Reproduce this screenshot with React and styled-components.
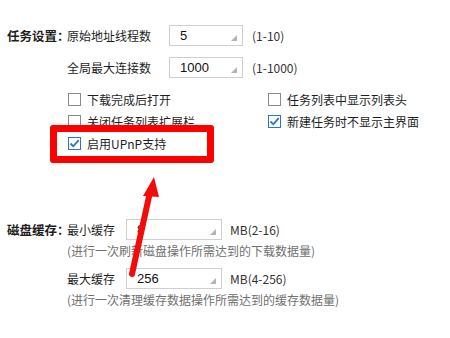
import React from 'react';
import styled, { createGlobalStyle } from 'styled-components';

const GlobalStyle = createGlobalStyle`
  html, body {
    margin: 0;
    padding: 0;
    background: #ffffff;
  }
  body {
    font-family: "Noto Sans CJK SC", "Noto Sans", sans-serif;
    font-size: 12px;
    color: #1e1e1e;
  }
`;

const Page = styled.div`
  position: relative;
  width: 450px;
  height: 338px;
  overflow: hidden;
  padding: 25px 0 0 7px;
  box-sizing: border-box;
`;

const Section = styled.div`
  display: flex;
  margin-top: ${(p) => p.$top || 0}px;
`;

const SectionLabel = styled.div`
  width: 60px;
  height: 21px;
  line-height: 21px;
  font-weight: bold;
  font-size: 12.5px;
  white-space: nowrap;
`;

const SectionBody = styled.div`
  display: flex;
  flex-direction: column;
`;

const FieldRow = styled.div`
  display: flex;
  align-items: center;
  height: 21px;
  margin-top: ${(p) => p.$top || 0}px;
`;

const FieldLabel = styled.span`
  width: ${(p) => p.$width}px;
  line-height: 21px;
  white-space: nowrap;
`;

const SpinBox = styled.div`
  position: relative;
  width: ${(p) => p.$width}px;
  height: 21px;
  box-sizing: border-box;
  border: 1px solid #cfcfcf;
  padding-left: 10px;
  line-height: 19px;
  font-family: "Liberation Sans", "Noto Sans", sans-serif;
  font-size: 13px;
  color: #111;
`;

const SpinArrow = styled.span`
  position: absolute;
  right: 5px;
  bottom: 4px;
  width: 0;
  height: 0;
  border-left: 6px solid transparent;
  border-bottom: 6px solid #b4b4b4;
`;

const Suffix = styled.span`
  margin-left: ${(p) => p.$gap || 9}px;
  white-space: nowrap;
  color: #333;
`;

const CheckGrid = styled.div`
  display: grid;
  grid-template-columns: 200px 200px;
  grid-auto-rows: 22px;
  margin-top: 10px;
  padding-left: 1px;
`;

const CheckItem = styled.label`
  display: flex;
  align-items: center;
  white-space: nowrap;
`;

const Box = styled.span`
  width: 13px;
  height: 13px;
  box-sizing: border-box;
  border: 1px solid ${(p) => (p.$checked ? '#2a72cc' : '#8a8a8a')};
  margin-right: 6px;
  display: flex;
  align-items: center;
  justify-content: center;
  background: #fff;
`;

const HelpText = styled.div`
  height: 22px;
  line-height: 22px;
  color: #707070;
  white-space: nowrap;
`;

const Highlight = styled.div`
  position: absolute;
  left: 50px;
  top: 125px;
  width: 164px;
  height: 38px;
  box-sizing: border-box;
  border: 7px solid #ff0000;
  border-radius: 3px;
`;

const ArrowLayer = styled.svg`
  position: absolute;
  left: 0;
  top: 0;
  pointer-events: none;
`;

function CheckBox({ checked, children }) {
  return (
    <CheckItem>
      <Box $checked={checked}>
        {checked && (
          <svg width="11" height="11" viewBox="0 0 11 11">
            <path d="M1.5 5.5 L4.3 8.3 L9.7 2.2" fill="none" stroke="#2a72cc" strokeWidth="1.8" />
          </svg>
        )}
      </Box>
      {children}
    </CheckItem>
  );
}

function Spin({ width, value }) {
  return (
    <SpinBox $width={width}>
      {value}
      <SpinArrow />
    </SpinBox>
  );
}

export default function App() {
  return (
    <Page>
      <GlobalStyle />
      <Section>
        <SectionLabel>任务设置：</SectionLabel>
        <SectionBody>
          <FieldRow>
            <FieldLabel $width={102}>原始地址线程数</FieldLabel>
            <Spin width={74} value="5" />
            <Suffix>(1-10)</Suffix>
          </FieldRow>
          <FieldRow $top={11}>
            <FieldLabel $width={102}>全局最大连接数</FieldLabel>
            <Spin width={74} value="1000" />
            <Suffix>(1-1000)</Suffix>
          </FieldRow>
          <CheckGrid>
            <CheckBox>下载完成后打开</CheckBox>
            <CheckBox>任务列表中显示列表头</CheckBox>
            <CheckBox>关闭任务列表扩展栏</CheckBox>
            <CheckBox checked>新建任务时不显示主界面</CheckBox>
            <CheckBox checked>启用UPnP支持</CheckBox>
          </CheckGrid>
        </SectionBody>
      </Section>

      <Section $top={65}>
        <SectionLabel>磁盘缓存：</SectionLabel>
        <SectionBody>
          <FieldRow>
            <FieldLabel $width={59}>最小缓存</FieldLabel>
            <Spin width={96} value="8" />
            <Suffix $gap={8}>MB(2-16)</Suffix>
          </FieldRow>
          <HelpText>(进行一次刷新磁盘操作所需达到的下载数据量)</HelpText>
          <FieldRow $top={6}>
            <FieldLabel $width={59}>最大缓存</FieldLabel>
            <Spin width={96} value="256" />
            <Suffix $gap={8}>MB(4-256)</Suffix>
          </FieldRow>
          <HelpText>(进行一次清理缓存数据操作所需达到的缓存数据量)</HelpText>
        </SectionBody>
      </Section>

      <Highlight />
      <ArrowLayer width="450" height="338" viewBox="0 0 450 338">
        <line x1="132" y1="274" x2="150" y2="192" stroke="#f20d0d" strokeWidth="6" strokeLinecap="round" />
        <polygon points="154,177 143,196 159,197" fill="#f20d0d" />
      </ArrowLayer>
    </Page>
  );
}
